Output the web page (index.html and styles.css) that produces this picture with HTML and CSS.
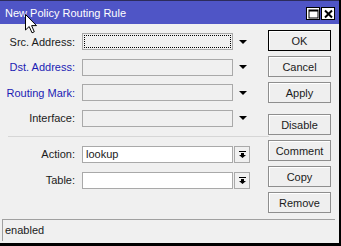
FILE: index.html
```html
<!DOCTYPE html>
<html lang="en">
<head>
    <meta charset="UTF-8">
    <meta name="viewport" content="width=device-width, initial-scale=1.0">
    <title>New Policy Routing Rule</title>
    <link rel="stylesheet" href="styles.css">
</head>
<body>
    <div class="window">
        <div class="titlebar">
            <span class="title">New Policy Routing Rule</span>
            <div class="controls">
                <div class="ctl">
                    <svg width="11" height="10" viewBox="0 0 11 10"><rect x="1" y="1" width="9" height="8" fill="none" stroke="#000" stroke-width="1"/><rect x="1" y="1" width="9" height="1.5" fill="#000"/></svg>
                </div>
                <div class="ctl">
                    <svg width="11" height="10" viewBox="0 0 11 10"><path d="M2 1.5 L9 8.5 M9 1.5 L2 8.5" stroke="#000" stroke-width="2"/></svg>
                </div>
            </div>
        </div>

        <div class="content">
            <div class="form">
                <div class="row">
                    <label>Src. Address:</label>
                    <div class="field off"><div class="focus"></div></div>
                    <div class="arrow"></div>
                </div>
                <div class="row">
                    <label class="blue">Dst. Address:</label>
                    <div class="field off"></div>
                    <div class="arrow"></div>
                </div>
                <div class="row">
                    <label class="blue">Routing Mark:</label>
                    <div class="field off"></div>
                    <div class="arrow"></div>
                </div>
                <div class="row">
                    <label>Interface:</label>
                    <div class="field off"></div>
                    <div class="arrow"></div>
                </div>
                <div class="sep"></div>
                <div class="row">
                    <label>Action:</label>
                    <div class="field short">lookup</div>
                    <div class="drop">
                        <svg width="7" height="7" viewBox="0 0 7 7"><rect x="0" y="0" width="7" height="1" fill="#000"/><path d="M2 2 H5 V4 H7 L3.5 7 L0 4 H2 Z" fill="#000"/></svg>
                    </div>
                </div>
                <div class="row">
                    <label>Table:</label>
                    <div class="field short"></div>
                    <div class="drop">
                        <svg width="7" height="7" viewBox="0 0 7 7"><rect x="0" y="0" width="7" height="1" fill="#000"/><path d="M2 2 H5 V4 H7 L3.5 7 L0 4 H2 Z" fill="#000"/></svg>
                    </div>
                </div>
            </div>

            <div class="buttons">
                <button class="btn default">OK</button>
                <button class="btn">Cancel</button>
                <button class="btn">Apply</button>
                <button class="btn space">Disable</button>
                <button class="btn">Comment</button>
                <button class="btn">Copy</button>
                <button class="btn">Remove</button>
            </div>
        </div>

        <div class="status">enabled</div>

        <svg class="cursor" width="13" height="20" viewBox="0 0 13 20"><path d="M0.5 0.5 L0.5 16 L4.2 12.5 L7 18.8 L9.3 17.8 L6.6 11.6 L11.5 11.6 Z" fill="#fff" stroke="#000" stroke-width="1" stroke-linejoin="miter"/></svg>
    </div>
</body>
</html>
```

FILE: styles.css
```css
*{
    margin: 0;
    padding: 0;
    box-sizing: border-box;
}
html,body{
    width: 341px;
    height: 246px;
    overflow: hidden;
}
body{
    font-family: "Liberation Sans", Arial, sans-serif;
    font-size: 11px;
    color: #1b1b1b;
    background: #000;
}
.window{
    position: relative;
    width: 339px;
    height: 243px;
    background-color: #f0f0f0;
    border-top: 1px solid #2c2c5c;
    display: flex;
    flex-direction: column;
}
.titlebar{
    height: 23px;
    background-color: #4f55c6;
    display: flex;
    align-items: center;
    justify-content: space-between;
    padding: 0 4px 0 5px;
    flex-shrink: 0;
}
.titlebar .title{
    color: #fff;
    font-size: 11px;
    margin-top: 1px;
}
.controls{
    display: flex;
    gap: 1px;
    margin-top: 2px;
}
.controls .ctl{
    width: 14px;
    height: 13px;
    background-color: #fff;
    border: 1px solid #000;
    display: flex;
    align-items: center;
    justify-content: center;
}
.content{
    display: flex;
    flex: 1;
    padding-top: 6px;
}
.form{
    width: 264px;
    display: flex;
    flex-direction: column;
    gap: 8.6px;
    padding-top: 3px;
}
.row{
    display: flex;
    align-items: center;
    height: 17px;
}
.row label{
    width: 76px;
    text-align: right;
    padding-right: 1px;
}
.row label.blue{
    color: #1c1cb4;
}
.field{
    margin-left: 6px;
    width: 151px;
    height: 17px;
    border: 1px solid #a9a9a9;
    background-color: #fff;
    padding: 1px 3px;
    line-height: 13px;
}
.field.off{
    background-color: #f0f0f0;
    padding: 1px;
}
.field .focus{
    width: 100%;
    height: 100%;
    border: 1px dotted #000;
}
.field.short{
    width: 151px;
}
.arrow{
    margin-left: 6px;
    width: 0;
    height: 0;
    border-left: 4px solid transparent;
    border-right: 4px solid transparent;
    border-top: 4px solid #000;
}
.drop{
    margin-left: 1px;
    width: 16px;
    height: 17px;
    border: 1px solid #a9a9a9;
    background-color: #f0f0f0;
    display: flex;
    align-items: center;
    justify-content: center;
}
.sep{
    height: 1px;
    background-color: #d6d6d6;
    margin: 1px -5px 0 8px;
}
.buttons{
    display: flex;
    flex-direction: column;
    gap: 5px;
    padding-left: 4px;
}
.btn{
    width: 63px;
    height: 21px;
    font-family: "Liberation Sans", Arial, sans-serif;
    font-size: 11px;
    color: #1b1b1b;
    background-color: #efefef;
    border: 1px solid #8e8e8e;
    box-shadow: inset 1px 1px 0 #fff;
}
.btn.default{
    border: 1px solid #000;
}
.btn.space{
    margin-top: 6px;
}
.status{
    margin: 0 4px 2px 2px;
    height: 22px;
    border-top: 1px solid #a0a0a0;
    border-left: 1px solid #a0a0a0;
    padding: 3px 2px;
    line-height: 14px;
}
.cursor{
    position: absolute;
    left: 25px;
    top: 13px;
}
```
